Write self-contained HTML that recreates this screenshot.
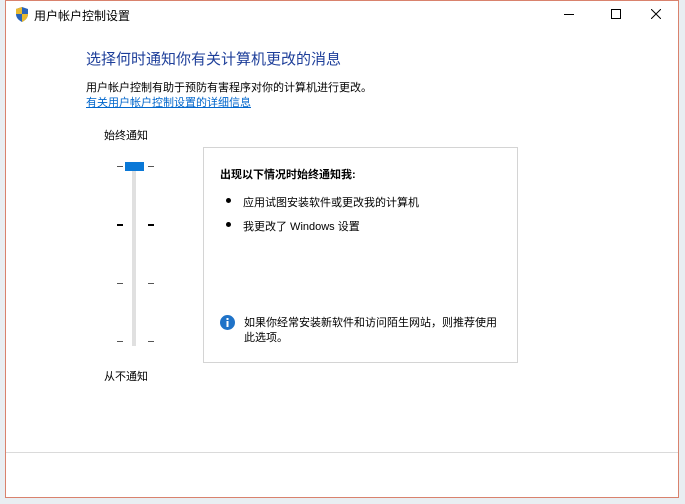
<!DOCTYPE html>
<html><head><meta charset="utf-8"><style>
body{margin:0;width:685px;height:504px;background:#e9eef2;position:relative;overflow:hidden;font-family:"Liberation Sans","Noto Sans CJK SC",sans-serif;color:#000}
.win{position:absolute;left:5px;top:0;width:672px;height:496px;background:#fff;border:1px solid #d9826d;}
.a{position:absolute;white-space:nowrap}
.tick{position:absolute;height:1px;width:6px;background:#555}
.tick.b{height:2px;background:#000}
.dot{position:absolute;width:5px;height:5px;border-radius:50%;background:#000}
</style></head><body>
<div class="win">
<svg class="a" style="left:9px;top:6px" width="14" height="15" viewBox="0 0 14 15"><path d="M7 0L1 2v5c0 4 3 6.5 6 8 3-1.5 6-4 6-8V2z" fill="#2a63b8"/><path d="M7 0v7H1V2z" fill="#e8b92f"/><path d="M7 7h6c0 4-3 6.5-6 8z" fill="#e8b92f"/></svg>
<div class="a" style="left:28px;top:6px;font-size:12px">用户帐户控制设置</div>
<div class="a" style="left:558px;top:13px;width:10px;height:1px;background:#000"></div>
<div class="a" style="left:605px;top:8px;width:8px;height:8px;border:1px solid #000"></div>
<svg class="a" style="left:645px;top:8px" width="10" height="10"><path d="M0 0L10 10M10 0L0 10" stroke="#000" stroke-width="1"/></svg>
<div class="a" style="left:80px;top:47px;font-size:15px;color:#1e3f9a">选择何时通知你有关计算机更改的消息</div>
<div class="a" style="left:80px;top:78px;font-size:11px">用户帐户控制有助于预防有害程序对你的计算机进行更改。</div>
<div class="a" style="left:80px;top:93px;font-size:11px;color:#0066cc;text-decoration:underline">有关用户帐户控制设置的详细信息</div>
<div class="a" style="left:98px;top:126px;font-size:11px">始终通知</div>
<div class="a" style="left:98px;top:367px;font-size:11px">从不通知</div>
<div class="a" style="left:126px;top:165px;width:4px;height:180px;background:#e0e0e0"></div>
<div class="tick" style="left:111px;top:165px"></div><div class="tick" style="left:142px;top:165px"></div>
<div class="tick b" style="left:111px;top:223px"></div><div class="tick b" style="left:142px;top:223px"></div>
<div class="tick" style="left:111px;top:282px"></div><div class="tick" style="left:142px;top:282px"></div>
<div class="tick" style="left:111px;top:340px"></div><div class="tick" style="left:142px;top:340px"></div>
<div class="a" style="left:119px;top:161px;width:19px;height:9px;background:#0a78d7"></div>
<div class="a" style="left:197px;top:146px;width:313px;height:214px;border:1px solid #d4d4d4"></div>
<div class="a" style="left:214px;top:165px;font-size:11px;font-weight:bold">出现以下情况时始终通知我:</div>
<div class="dot" style="left:220px;top:197px"></div>
<div class="a" style="left:237px;top:193px;font-size:11px">应用试图安装软件或更改我的计算机</div>
<div class="dot" style="left:220px;top:221px"></div>
<div class="a" style="left:237px;top:217px;font-size:11px">我更改了 Windows 设置</div>
<svg class="a" style="left:214px;top:314px" width="15" height="15"><circle cx="7.5" cy="7.5" r="7.5" fill="#1f73c8"/><rect x="6.5" y="6" width="2" height="6" fill="#fff"/><rect x="6.5" y="3" width="2" height="2" fill="#fff"/></svg>
<div class="a" style="left:238px;top:315px;font-size:11px;line-height:15px">如果你经常安装新软件和访问陌生网站，则推荐使用<br>此选项。</div>
<div class="a" style="left:0;top:451px;width:672px;height:1px;background:#dadada"></div>
</div>
</body></html>
